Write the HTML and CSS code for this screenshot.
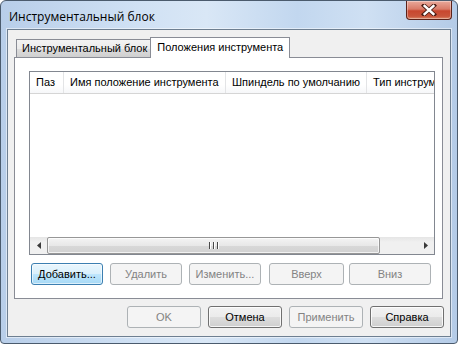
FILE: index.html
```html
<!DOCTYPE html>
<html lang="ru">
<head>
    <meta charset="UTF-8">
    <title>Инструментальный блок</title>
    <link rel="stylesheet" href="styles.css">
</head>
<body>

    <div class="window">
        <!-- заголовок окна -->
        <div class="titlebar">
            <span class="title">Инструментальный блок</span>
            <div class="close-btn">
                <svg width="16" height="12" viewBox="0 0 16 12">
                    <path d="M3 1.5 L13 10.5 M13 1.5 L3 10.5" stroke="#4a1d14" stroke-width="4.2" stroke-linecap="square"/>
                    <path d="M3.6 2 L12.4 10 M12.4 2 L3.6 10" stroke="#ffffff" stroke-width="2.4" stroke-linecap="square"/>
                </svg>
            </div>
        </div>

        <div class="client">
            <div class="tabs">
                <div class="tab">Инструментальный блок</div>
                <div class="tab active">Положения инструмента</div>
            </div>

            <div class="panel">
                <div class="listview">
                    <div class="lv-header">
                        <div class="col col-slot">Паз</div>
                        <div class="col col-name">Имя положение инструмента</div>
                        <div class="col col-spindle">Шпиндель по умолчанию</div>
                        <div class="col col-type">Тип инструмента</div>
                    </div>
                    <div class="lv-body"></div>
                    <div class="hscroll">
                        <div class="sb-arrow">
                            <svg width="4" height="7" viewBox="0 0 4 7"><path d="M4 0 L0 3.5 L4 7 Z" fill="#3a3a3a"/></svg>
                        </div>
                        <div class="sb-track">
                            <div class="sb-thumb">
                                <span class="grip"></span><span class="grip"></span><span class="grip"></span>
                            </div>
                        </div>
                        <div class="sb-arrow">
                            <svg width="4" height="7" viewBox="0 0 4 7"><path d="M0 0 L4 3.5 L0 7 Z" fill="#3a3a3a"/></svg>
                        </div>
                    </div>
                </div>

                <div class="list-buttons">
                    <button class="btn btn-focus">Добавить...</button>
                    <button class="btn" disabled>Удалить</button>
                    <button class="btn" disabled>Изменить...</button>
                    <button class="btn btn-up" disabled>Вверх</button>
                    <button class="btn btn-down" disabled>Вниз</button>
                </div>
            </div>

            <div class="dialog-buttons">
                <button class="btn" disabled>OK</button>
                <button class="btn">Отмена</button>
                <button class="btn" disabled>Применить</button>
                <button class="btn">Справка</button>
            </div>
        </div>
    </div>

</body>
</html>
```

FILE: styles.css
```css
body {
    margin: 0;
    padding: 0;
    font-family: "Liberation Sans", Arial, sans-serif;
    font-size: 11px;
    color: #000;
}

.window {
    width: 458px;
    height: 344px;
    box-sizing: border-box;
    border: 1px solid #4b5b6d;
    border-radius: 6px 6px 4px 4px;
    padding: 0 6px 6px 6px;
    background: linear-gradient(to right, #b8cee9 0%, #d0e1f4 30%, #d9e7f6 45%, #c2d7ef 65%, #cfe0f3 80%, #b4cbe7 100%);
    display: flex;
    flex-direction: column;
}

/* заголовок */
.titlebar {
    height: 28px;
    display: flex;
    align-items: flex-start;
}

.title {
    flex: 1;
    padding: 7px 0 0 2px;
    font-family: "Open Sans", "Noto Sans", sans-serif;
    font-size: 12px;
    color: #000;
}

.close-btn {
    width: 46px;
    height: 19px;
    box-sizing: border-box;
    margin-right: -1px;
    border: 1px solid #5b2219;
    border-top: none;
    border-radius: 0 0 4px 4px;
    background: linear-gradient(to bottom, #e9a99b 0%, #d97b68 45%, #c8472f 55%, #c9553b 85%, #dc8a6a 100%);
    box-shadow: inset 0 0 0 1px rgba(255, 255, 255, 0.35);
    display: flex;
    justify-content: center;
    align-items: center;
}

.client {
    flex: 1;
    background-color: #f0f0f0;
    border: 1px solid #6e7f91;
    box-shadow: 0 0 0 1px rgba(255, 255, 255, 0.5);
    padding: 7px 7px 0 6px;
    display: flex;
    flex-direction: column;
}

/* вкладки */
.tabs {
    display: flex;
    align-items: flex-end;
    padding-left: 2px;
    height: 20px;
    position: relative;
    z-index: 1;
}

.tab {
    height: 17px;
    line-height: 17px;
    padding: 0 5px 0 5px;
    border: 1px solid #898c95;
    border-bottom: none;
    background: linear-gradient(to bottom, #f3f3f3 0%, #ebebeb 50%, #dddddd 51%, #cfcfcf 100%);
    white-space: nowrap;
}

.tab.active {
    height: 20px;
    line-height: 19px;
    margin: 0 -2px 0 -3px;
    padding: 0 6px;
    background: #ffffff;
    position: relative;
    top: 1px;
}

.panel {
    height: 242px;
    box-sizing: border-box;
    border: 1px solid #898c95;
    background-color: #ffffff;
    padding: 13px 7px 0 14px;
}

/* список */
.listview {
    height: 184px;
    box-sizing: border-box;
    border: 1px solid #828790;
    display: flex;
    flex-direction: column;
}

.lv-header {
    height: 21px;
    display: flex;
    overflow: hidden;
    white-space: nowrap;
    background: linear-gradient(to bottom, #ffffff 0%, #ffffff 60%, #f6f7f9 100%);
    border-bottom: 1px solid #d5d5d5;
}

.col {
    flex: none;
    box-sizing: border-box;
    padding: 0 6px;
    line-height: 21px;
    border-right: 1px solid #e3e4e6;
    overflow: hidden;
}

.col-slot { width: 34px; }
.col-name { width: 162px; }
.col-spindle { width: 141px; }
.col-type { width: 120px; border-right: none; }

.lv-body {
    flex: 1;
}

.hscroll {
    height: 17px;
    display: flex;
    background: linear-gradient(to bottom, #e5e5e5 0%, #f0f0f0 30%, #f0f0f0 100%);
}

.sb-arrow {
    width: 17px;
    display: flex;
    justify-content: center;
    align-items: center;
}

.sb-track {
    flex: 1;
    display: flex;
}

.sb-thumb {
    width: 333px;
    box-sizing: border-box;
    border: 1px solid #979797;
    border-radius: 2px;
    background: linear-gradient(to bottom, #f4f4f4 0%, #e8e8e8 50%, #d8d8d8 51%, #d2d2d2 100%);
    box-shadow: inset 0 0 0 1px rgba(255, 255, 255, 0.7);
    display: flex;
    justify-content: center;
    align-items: center;
    gap: 2px;
}

.grip {
    width: 1px;
    height: 7px;
    background-color: #4a4a4a;
    border-right: 1px solid #ffffff;
}

/* кнопки */
.btn {
    height: 22px;
    box-sizing: border-box;
    padding: 0;
    font-family: inherit;
    font-size: 11px;
    color: #000;
    border: 1px solid #707070;
    border-radius: 3px;
    background: linear-gradient(to bottom, #f2f2f2 0%, #ebebeb 50%, #dddddd 51%, #cfcfcf 100%);
    box-shadow: inset 0 0 0 1px rgba(255, 255, 255, 0.8);
}

.btn:disabled {
    color: #838383;
    border-color: #adb2b5;
    background: #f4f4f4;
    box-shadow: none;
}

.btn-focus {
    border-color: #3c7fb1;
    background: linear-gradient(to bottom, #eaf6fd 0%, #d9f0fc 50%, #bee6fd 51%, #a7d9f5 100%);
    box-shadow: inset 0 0 0 1px rgba(255, 255, 255, 0.6);
}

.list-buttons {
    display: flex;
    gap: 7px;
    margin-top: 8px;
    padding-left: 2px;
}

.list-buttons .btn { width: 72px; }
.list-buttons .btn-up { width: 75px; margin-left: 1px; }
.list-buttons .btn-down { width: 82px; margin-left: -2px; }

.dialog-buttons {
    display: flex;
    justify-content: flex-end;
    gap: 7px;
    margin-top: 7px;
    margin-right: -1px;
}

.dialog-buttons .btn { width: 74px; }
```
